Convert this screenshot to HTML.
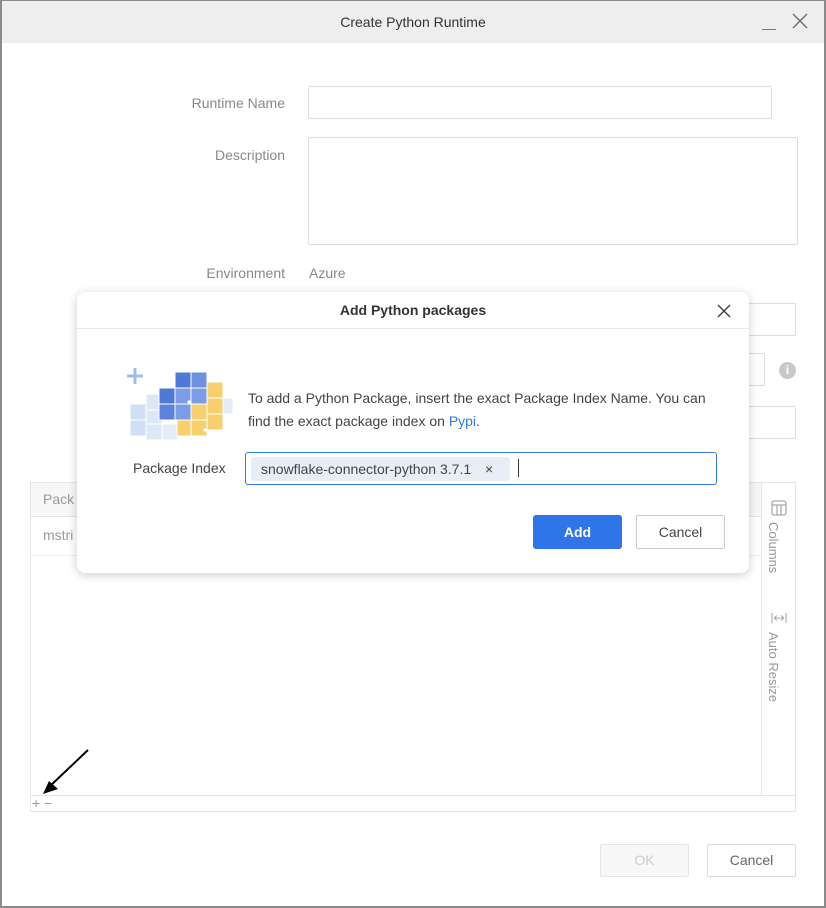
<!DOCTYPE html>
<html><head><style>
*{box-sizing:border-box;margin:0;padding:0}
body{width:826px;height:908px;position:relative;overflow:hidden;font-family:"Liberation Sans",sans-serif;background:#fff}
.frame{position:absolute;left:0;top:0;width:826px;height:908px;border:2px solid #8a8a8a;border-top-width:1px}
.a{position:absolute}
.title{left:2px;top:1px;width:822px;height:42px;background:#eeeeee;text-align:center;line-height:42px;font-size:14px;color:#333}
.lbl{font-size:14px;color:#888;text-align:right;width:200px}
.in{border:1px solid #dcdcdc;border-radius:2px;background:#fff}
.btn{border:1px solid #d9d9d9;border-radius:2px;text-align:center;font-size:14px}
</style></head><body>
<div class="frame"></div>
<div class="a title">Create Python Runtime</div>
<div class="a" style="left:762px;top:29px;width:14px;height:1px;background:#777"></div>
<svg class="a" style="left:792px;top:13px" width="16" height="16"><path d="M1 1L15 15M15 1L1 15" stroke="#666" stroke-width="1.3"/></svg>

<div class="a lbl" style="left:85px;top:95px">Runtime Name</div>
<div class="a in" style="left:308px;top:86px;width:464px;height:33px"></div>
<div class="a lbl" style="left:85px;top:147px">Description</div>
<div class="a in" style="left:308px;top:137px;width:490px;height:108px"></div>
<div class="a lbl" style="left:85px;top:265px">Environment</div>
<div class="a" style="left:309px;top:265px;font-size:14px;color:#888">Azure</div>
<div class="a in" style="left:740px;top:303px;width:56px;height:33px"></div>
<div class="a in" style="left:740px;top:353px;width:25px;height:33px"></div>
<div class="a" style="left:779px;top:362px;width:17px;height:17px;border-radius:50%;background:#c8c8c8;color:#fff;font-size:12px;font-weight:bold;text-align:center;line-height:17px">i</div>
<div class="a in" style="left:740px;top:406px;width:56px;height:33px"></div>

<div class="a" style="left:30px;top:482px;width:766px;height:330px;border:1px solid #e5e5e5"></div>
<div class="a" style="left:31px;top:483px;width:730px;height:34px;background:#f7f7f7;border-bottom:1px solid #e5e5e5"></div>
<div class="a" style="left:43px;top:491px;font-size:14px;color:#999">Pack</div>
<div class="a" style="left:43px;top:527px;font-size:14px;color:#999">mstri</div>
<div class="a" style="left:31px;top:555px;width:730px;height:1px;background:#eee"></div>
<div class="a" style="left:761px;top:483px;width:1px;height:312px;background:#e5e5e5"></div>
<div class="a" style="left:31px;top:795px;width:765px;height:1px;background:#e5e5e5"></div>
<div class="a" style="left:32px;top:796px;width:30px;height:16px;color:#999;font-size:14px;line-height:14px">+ −</div>
<svg class="a" style="left:771px;top:500px" width="16" height="16"><rect x="1" y="1" width="14" height="14" rx="2" fill="none" stroke="#aaa" stroke-width="1.3"/><path d="M1 5H15M6 5V15M10 5V15" stroke="#aaa" stroke-width="1.2"/></svg>
<div class="a" style="left:766px;top:522px;writing-mode:vertical-rl;font-size:13px;color:#999">Columns</div>
<svg class="a" style="left:771px;top:612px" width="16" height="12"><path d="M1 1V11M15 1V11M3 6H13M3 6l3-2.5M3 6l3 2.5M13 6l-3-2.5M13 6l-3 2.5" stroke="#aaa" stroke-width="1.1" fill="none"/></svg>
<div class="a" style="left:766px;top:632px;writing-mode:vertical-rl;font-size:13px;color:#999">Auto Resize</div>
<svg class="a" style="left:40px;top:748px" width="52" height="50"><line x1="48" y1="2" x2="8" y2="40" stroke="#000" stroke-width="2"/><polygon points="3,46 18,41 9,33" fill="#000"/></svg>

<div class="a btn" style="left:600px;top:844px;width:89px;height:33px;line-height:31px;color:#ccc;background:#f7f7f7;border-color:#e5e5e5">OK</div>
<div class="a btn" style="left:707px;top:844px;width:89px;height:33px;line-height:31px;color:#666">Cancel</div>

<div class="a" style="left:77px;top:292px;width:672px;height:281px;background:#fff;border-radius:8px;box-shadow:0 2px 10px rgba(0,0,0,.2)">
 <div class="a" style="left:0;top:0;width:672px;height:37px;border-bottom:1px solid #e8e8e8;text-align:center;line-height:37px;font-size:14px;font-weight:bold;color:#333">Add Python packages</div>
 <svg class="a" style="left:640px;top:12px" width="14" height="14"><path d="M1 1L13 13M13 1L1 13" stroke="#444" stroke-width="1.5"/></svg>
 <svg class="a" style="left:48px;top:74px" width="110" height="80">
  <g stroke="#fff" stroke-width="1">
  <rect x="5" y="38" width="16" height="16" fill="#cfdff5"/><rect x="5" y="54" width="16" height="16" fill="#cfdff5"/>
  <rect x="21" y="28" width="16" height="16" fill="#dde8f7"/><rect x="21" y="44" width="16" height="16" fill="#dde8f7"/><rect x="21" y="58" width="16" height="16" fill="#dde8f7"/>
  <rect x="34" y="22" width="16" height="16" fill="#4f79d6"/><rect x="34" y="38" width="16" height="16" fill="#5b82dc"/><rect x="37" y="58" width="16" height="16" fill="#e3ecf9"/>
  <rect x="50" y="6" width="16" height="16" fill="#4f79d6"/><rect x="66" y="6" width="16" height="16" fill="#6f92e0"/><rect x="50" y="22" width="16" height="16" fill="#7d9ce6"/><rect x="50" y="38" width="16" height="16" fill="#7d9ce6"/><rect x="66" y="22" width="16" height="16" fill="#7d9ce6"/>
  <rect x="82" y="16" width="16" height="16" fill="#f5d06d"/><rect x="82" y="32" width="16" height="16" fill="#f5d06d"/><rect x="66" y="38" width="16" height="16" fill="#f5d06d"/>
  <rect x="66" y="54" width="16" height="16" fill="#f5d06d"/><rect x="82" y="48" width="16" height="16" fill="#f5d06d"/><rect x="52" y="54" width="14" height="16" fill="#f5d06d"/>
  <rect x="98" y="32" width="10" height="16" fill="#e3ecf9"/>
  </g>
  <circle cx="64" cy="36" r="1.6" fill="#fff"/><circle cx="80" cy="64" r="1.6" fill="#fff"/>
  <path d="M10 2v16M2 10h16" stroke="#9fbbec" stroke-width="3"/>
 </svg>
 <div class="a" style="left:171px;top:95px;width:480px;font-size:14px;line-height:23px;color:#444">To add a Python Package, insert the exact Package Index Name. You can find the exact package index on <span style="color:#2f7bdb">Pypi</span>.</div>
 <div class="a" style="left:56px;top:168px;font-size:14px;color:#444">Package Index</div>
 <div class="a" style="left:168px;top:160px;width:472px;height:33px;border:1px solid #2f7bdb;border-radius:3px"></div>
 <div class="a" style="left:174px;top:165px;width:259px;height:24px;background:#e8eef8;border-radius:3px;font-size:14px;line-height:24px;color:#444;padding-left:10px">snowflake-connector-python 3.7.1 <span style="margin-left:10px">×</span></div>
 <div class="a" style="left:441px;top:167px;width:1px;height:18px;background:#333"></div>
 <div class="a" style="left:456px;top:223px;width:89px;height:34px;background:#2f74e8;border-radius:3px;color:#fff;font-size:14px;font-weight:bold;text-align:center;line-height:34px">Add</div>
 <div class="a btn" style="left:559px;top:223px;width:89px;height:34px;line-height:32px;color:#444;border-color:#ccc">Cancel</div>
</div>
</body></html>
